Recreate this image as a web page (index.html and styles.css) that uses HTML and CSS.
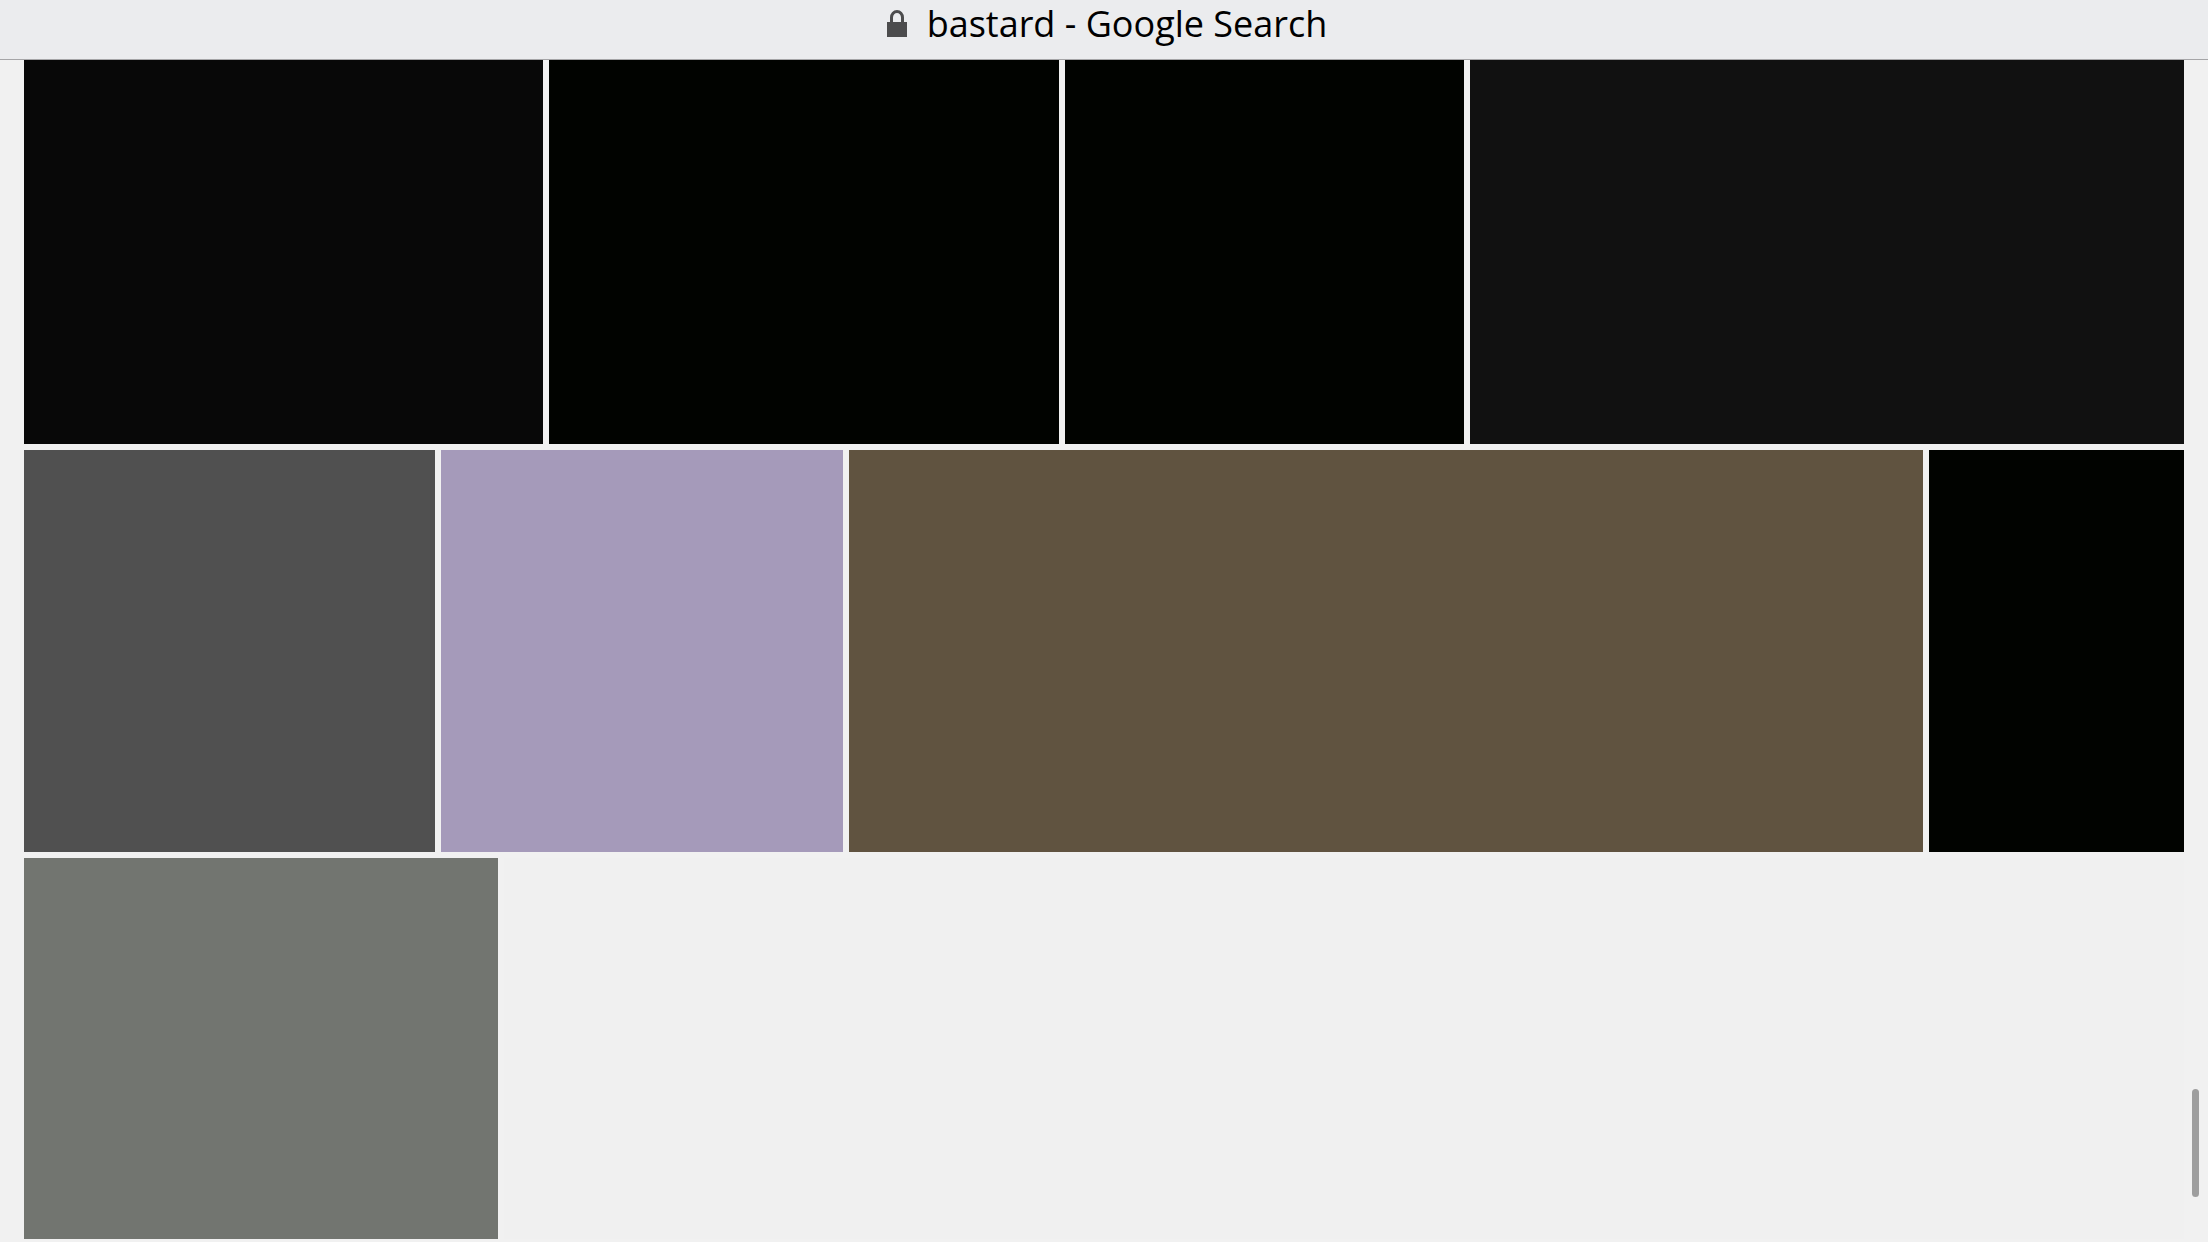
FILE: index.html
```html
<!DOCTYPE html>
<html lang="en">
<head>
  <meta charset="UTF-8">
  <meta name="viewport" content="width=device-width, initial-scale=1.0">
  <title>bastard - Google Search</title>
  <link rel="stylesheet" href="styles.css">
</head>
<body>

  <header class="title-bar">
    <svg class="lock" viewBox="0 0 20 28" aria-hidden="true">
      <path d="M0 12h20v15H0z" fill="#4c4c4d"/>
      <path d="M4.500 13V7.500a5.500 6 0 0 1 11 0V13" fill="none" stroke="#4c4c4d" stroke-width="3"/>
    </svg>
    <span class="title">bastard - Google Search</span>
  </header>

  <main class="results">
    <div class="row row-first">
      <div class="tile ink"></div>
      <div class="tile black"></div>
      <div class="tile black"></div>
      <div class="tile charcoal"></div>
    </div>
    <div class="row row-second">
      <div class="tile gray"></div>
      <div class="tile lilac"></div>
      <div class="tile brown"></div>
      <div class="tile black"></div>
    </div>
    <div class="row row-last">
      <div class="tile sage"></div>
      <div class="tile empty"></div>
    </div>
  </main>

  <div class="scroll-thumb"></div>

</body>
</html>
```
FILE: styles.css
```css
body {
  margin: 0;
  background-color: #f1f1f1;
  font-family: "Open Sans", "Noto Sans", sans-serif;
}
.title-bar {
  display: flex;
  justify-content: center;
  align-items: center;
  gap: 20px;
  box-sizing: border-box;
  height: 60px;
  padding: 0 0 11px 6px;
  background-color: #ebecee;
  border-bottom: 1px solid #a5a5a7;
}
.lock {
  width: 20px;
  height: 28px;
}
.title {
  font-size: 36px;
  line-height: 48px;
  color: #000;
  white-space: nowrap;
}
.results {
  display: grid;
  gap: 6px;
  padding: 0 24px 3px;
}
.row {
  display: grid;
  gap: 6px;
}
.row-first {
  grid-template-columns: 519fr 510fr 399fr 714fr;
  height: 384px;
}
.row-second {
  grid-template-columns: 411fr 402fr 1074fr 255fr;
  height: 402px;
}
.row-last {
  grid-template-columns: 474fr 1680fr;
  height: 381px;
}
.ink {
  background-color: #080808;
}
.black {
  background-color: #010300;
}
.charcoal {
  background-color: #111;
}
.gray {
  background-color: #505050;
}
.lilac {
  background-color: #a59aba;
}
.brown {
  background-color: #605340;
}
.sage {
  background-color: #727570;
}
.empty {
  background-color: #f0f0f0;
}
.scroll-thumb {
  position: fixed;
  right: 9px;
  bottom: 45px;
  width: 7px;
  height: 108px;
  border-radius: 4px;
  background-color: #9e9e9e;
}
```
